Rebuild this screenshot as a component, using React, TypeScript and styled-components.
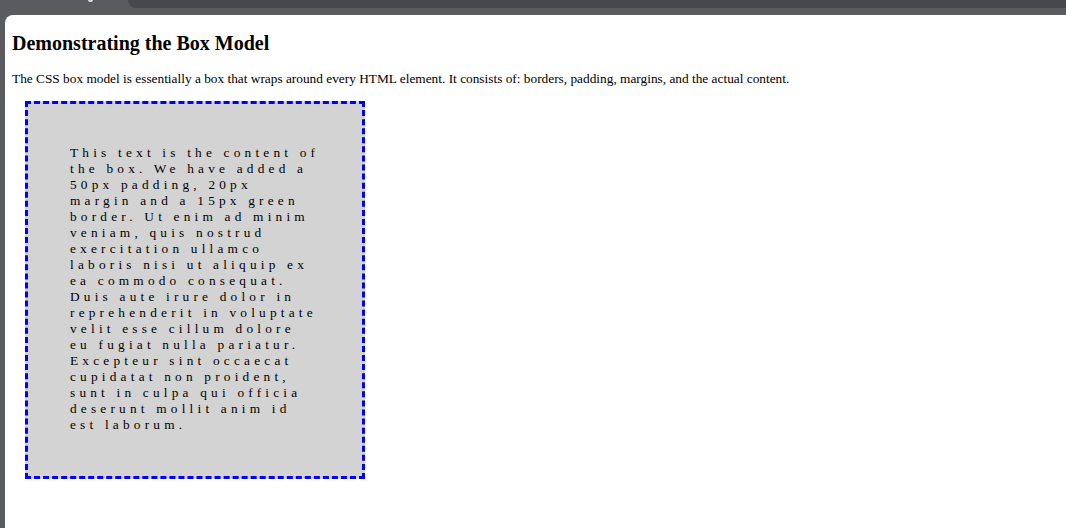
import React from 'react';
import styled, { createGlobalStyle } from 'styled-components';

const GlobalStyle = createGlobalStyle`
    html, body {
        margin: 0;
        padding: 0;
        height: 100%;
        overflow: hidden;
    }
    body {
        font-family: "Liberation Serif", "Times New Roman", serif;
        color: #000;
    }
`;

const Frame = styled.div`
    display: flex;
    flex-direction: column;
    height: 100vh;
    background: #5a5b5f;
`;

const TabStrip = styled.div`
    display: flex;
    height: 8px;
`;

const TabGap = styled.div`
    width: 128px;
    position: relative;
`;

const TabMark = styled.span<{ $left: number }>`
    position: absolute;
    top: 0;
    left: ${p => p.$left}px;
    width: 5px;
    height: 2px;
    border-radius: 0 0 2px 2px;
    background: #d8d8da;
`;

const Tab = styled.div`
    flex: 1;
    background: #47484c;
    border-bottom-left-radius: 8px;
`;

const Toolbar = styled.div`
    height: 7px;
`;

const Viewport = styled.div`
    flex: 1;
    margin-left: 5px;
    background: #fff;
    border-top-left-radius: 8px;
    padding: 17px 7px 0 7px;
    display: flex;
    flex-direction: column;
    align-items: flex-start;
`;

const Title = styled.h3`
    margin: 0;
    font-size: 20px;
    font-weight: bold;
`;

const Intro = styled.p`
    margin: 16px 0 0 0;
    font-size: 13.33px;
`;

const Box = styled.div`
    margin: 14px 0 0 13px;
    width: 250px;
    padding: 41px 42px 43px 42px;
    background: #d3d3d3;
    border: 3px dashed blue;
    font-size: 13.33px;
    line-height: 16px;
    letter-spacing: 4.2px;
`;

const App = () => {
    return (
        <>
            <GlobalStyle />
            <Frame>
                <TabStrip>
                    <TabGap>
                        <TabMark $left={88} />
                    </TabGap>
                    <Tab />
                </TabStrip>
                <Toolbar />
                <Viewport>
                    <Title>Demonstrating the Box Model</Title>
                    <Intro>
                        The CSS box model is essentially a box that wraps around every HTML element. It consists of: borders, padding, margins, and the actual content.
                    </Intro>
                    <Box>
                        This text is the content of the box. We have added a 50px padding, 20px margin and a 15px green border. Ut enim ad minim veniam, quis nostrud exercitation ullamco laboris nisi ut aliquip ex ea commodo consequat. Duis aute irure dolor in reprehenderit in voluptate velit esse cillum dolore eu fugiat nulla pariatur. Excepteur sint occaecat cupidatat non proident, sunt in culpa qui officia deserunt mollit anim id est laborum.
                    </Box>
                </Viewport>
            </Frame>
        </>
    );
};

export default App;
